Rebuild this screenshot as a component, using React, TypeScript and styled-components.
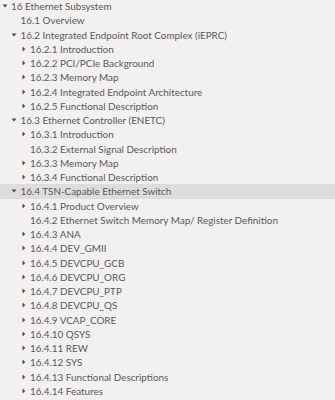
import React from "react";
import styled, { createGlobalStyle } from "styled-components";

const Global = createGlobalStyle`
  html, body { margin: 0; padding: 0; background: #f2f1f0; }
  body { width: 335px; height: 400px; overflow: hidden; }
`;

type Node = { label: string; level: number; state: "open" | "closed" | "leaf"; selected?: boolean };

const rows: Node[] = [
  { label: "16 Ethernet Subsystem", level: 0, state: "open" },
  { label: "16.1 Overview", level: 1, state: "leaf" },
  { label: "16.2 Integrated Endpoint Root Complex (iEPRC)", level: 1, state: "open" },
  { label: "16.2.1 Introduction", level: 2, state: "closed" },
  { label: "16.2.2 PCI/PCIe Background", level: 2, state: "closed" },
  { label: "16.2.3 Memory Map", level: 2, state: "closed" },
  { label: "16.2.4 Integrated Endpoint Architecture", level: 2, state: "closed" },
  { label: "16.2.5 Functional Description", level: 2, state: "closed" },
  { label: "16.3 Ethernet Controller (ENETC)", level: 1, state: "open" },
  { label: "16.3.1 Introduction", level: 2, state: "closed" },
  { label: "16.3.2 External Signal Description", level: 2, state: "leaf" },
  { label: "16.3.3 Memory Map", level: 2, state: "closed" },
  { label: "16.3.4 Functional Description", level: 2, state: "closed" },
  { label: "16.4 TSN-Capable Ethernet Switch", level: 1, state: "open", selected: true },
  { label: "16.4.1 Product Overview", level: 2, state: "closed" },
  { label: "16.4.2 Ethernet Switch Memory Map/ Register Definition", level: 2, state: "leaf" },
  { label: "16.4.3 ANA", level: 2, state: "closed" },
  { label: "16.4.4 DEV_GMII", level: 2, state: "closed" },
  { label: "16.4.5 DEVCPU_GCB", level: 2, state: "closed" },
  { label: "16.4.6 DEVCPU_ORG", level: 2, state: "closed" },
  { label: "16.4.7 DEVCPU_PTP", level: 2, state: "closed" },
  { label: "16.4.8 DEVCPU_QS", level: 2, state: "closed" },
  { label: "16.4.9 VCAP_CORE", level: 2, state: "closed" },
  { label: "16.4.10 QSYS", level: 2, state: "closed" },
  { label: "16.4.11 REW", level: 2, state: "closed" },
  { label: "16.4.12 SYS", level: 2, state: "closed" },
  { label: "16.4.13 Functional Descriptions", level: 2, state: "closed" },
  { label: "16.4.14 Features", level: 2, state: "closed" },
];

const Tree = styled.div`
  margin-top: -1px;
  display: flex;
  flex-direction: column;
  font-family: Lato, "Open Sans", sans-serif;
  font-size: 9.9px;
  color: #585858;
`;

const Row = styled.div<{ $level: number; $selected?: boolean }>`
  height: 14.25px;
  display: flex;
  align-items: center;
  padding-left: ${(p) => 1.5 + p.$level * 9.5}px;
  background: ${(p) => (p.$selected ? "#dedddb" : "transparent")};
  white-space: nowrap;
`;

const Expander = styled.span`
  width: 9.5px;
  height: 100%;
  display: flex;
  align-items: center;
  justify-content: flex-start;
  flex: none;
`;

const Label = styled.span`
  line-height: 14px;
`;

function Arrow({ state }: { state: Node["state"] }) {
  if (state === "leaf") return <Expander />;
  return (
    <Expander>
      <svg width="6" height="6" viewBox="0 0 6 6">
        {state === "open" ? (
          <path d="M0.5 1.6 L5.5 1.6 L3 4.4 Z" fill="#4d4d4d" />
        ) : (
          <path d="M1.5 0.5 L4.3 3 L1.5 5.5 Z" fill="#4d4d4d" />
        )}
      </svg>
    </Expander>
  );
}

export default function App() {
  return (
    <>
      <Global />
      <Tree>
        {rows.map((r) => (
          <Row key={r.label} $level={r.level} $selected={r.selected}>
            <Arrow state={r.state} />
            <Label>{r.label}</Label>
          </Row>
        ))}
      </Tree>
    </>
  );
}
